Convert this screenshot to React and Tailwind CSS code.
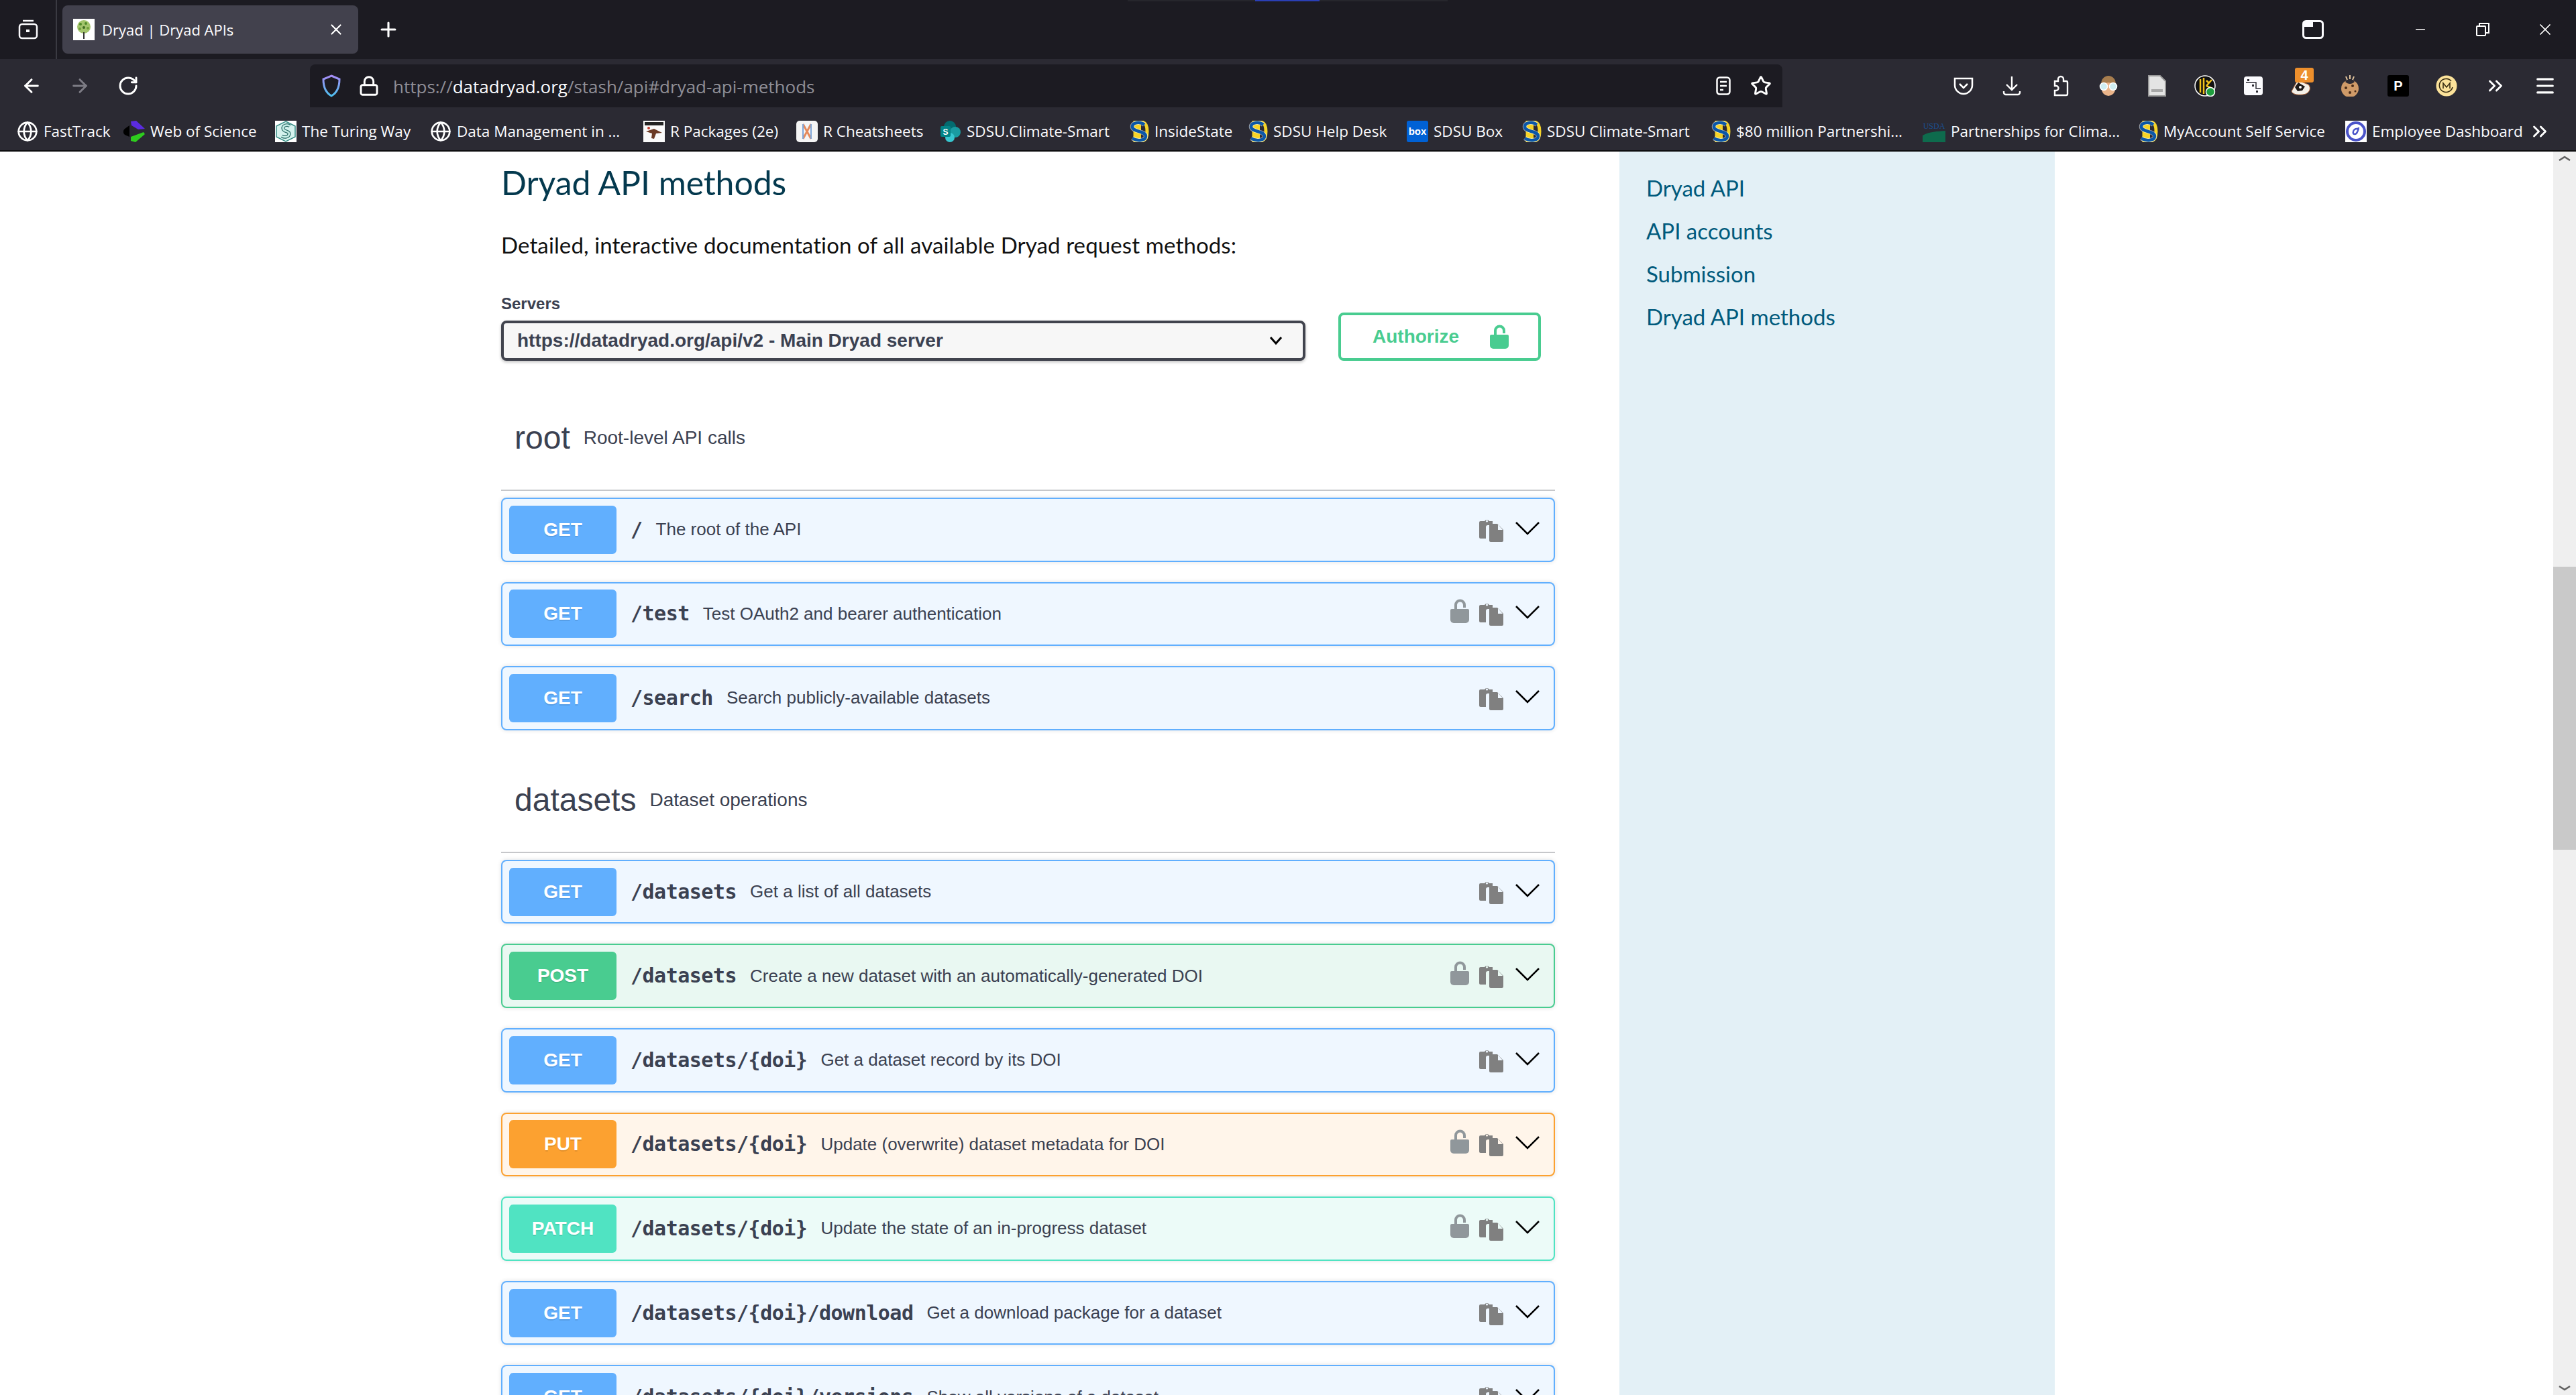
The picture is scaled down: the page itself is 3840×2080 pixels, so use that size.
import { Fragment } from 'react'
import { ArrowLeft, ArrowRight, RotateCw, Lock, Plus, X, Star, Minus, Menu, ChevronsRight, Globe } from 'lucide-react'

const UI_FONT = "font-['Open_Sans','Noto_Sans',sans-serif]"

const METHODS = {
  GET: { row: 'border-[#61affe] bg-[#eff7ff]', badge: 'bg-[#61affe]', bg: '#eff7ff' },
  POST: { row: 'border-[#49cc90] bg-[#e9f8f2]', badge: 'bg-[#49cc90]', bg: '#e9f8f2' },
  PUT: { row: 'border-[#fca130] bg-[#fff5ea]', badge: 'bg-[#fca130]', bg: '#fff5ea' },
  PATCH: { row: 'border-[#50e3c2] bg-[#ecfbf8]', badge: 'bg-[#50e3c2]', bg: '#ecfbf8' },
}

const ROOT_OPS = [
  { method: 'GET', path: '/', desc: 'The root of the API' },
  { method: 'GET', path: '/test', desc: 'Test OAuth2 and bearer authentication', lock: true },
  { method: 'GET', path: '/search', desc: 'Search publicly-available datasets' },
]

const DATASET_OPS = [
  { method: 'GET', path: '/datasets', desc: 'Get a list of all datasets' },
  { method: 'POST', path: '/datasets', desc: 'Create a new dataset with an automatically-generated DOI', lock: true },
  { method: 'GET', path: '/datasets/{doi}', desc: 'Get a dataset record by its DOI' },
  { method: 'PUT', path: '/datasets/{doi}', desc: 'Update (overwrite) dataset metadata for DOI', lock: true },
  { method: 'PATCH', path: '/datasets/{doi}', desc: 'Update the state of an in-progress dataset', lock: true },
  { method: 'GET', path: '/datasets/{doi}/download', desc: 'Get a download package for a dataset' },
  { method: 'GET', path: '/datasets/{doi}/versions', desc: 'Show all versions of a dataset' },
]

function SdsuIcon() {
  return (
    <svg width="30" height="32" viewBox="0 0 30 32" className="shrink-0">
      <path d="M9 2h9c7 0 9 5 9 14s-2 14-9 14H9z" fill="none" stroke="#f5d328" strokeWidth="5" />
      <rect x="11" y="1" width="7" height="30" fill="#f5d328" />
      <path d="M23 6C17 1 5 2 5 9c0 8 20 6 20 14 0 7-13 8-20 3" fill="none" stroke="#fff" strokeWidth="6.5" opacity="0.55" />
      <path d="M23 6C17 1 5 2 5 9c0 8 20 6 20 14 0 7-13 8-20 3" fill="none" stroke="#0b57a8" strokeWidth="4.5" />
    </svg>
  )
}

function BookmarkIcon({ kind }) {
  if (kind === 'globe') return <Globe size={32} strokeWidth={2} className="shrink-0 text-white" />
  if (kind === 'sdsu') return <SdsuIcon />
  if (kind === 'wos') {
    return (
      <svg width="32" height="32" viewBox="0 0 32 32" className="shrink-0">
        <path d="M11 1l8-1 13 12-10 1-10-6z" fill="#5b2be0" />
        <path d="M11 24l19-7 2 3-14 12-7-2z" fill="#2ecc1e" />
        <path d="M2 12l7-5v17l-7-3c-3-3-3-6 0-9z" fill="#000" />
      </svg>
    )
  }
  if (kind === 'turing') {
    return (
      <svg width="32" height="32" viewBox="0 0 32 32" className="shrink-0">
        <rect width="32" height="32" fill="#fff" />
        <path d="M16 1l14 7v16l-14 7-14-7V8z" fill="#d5f2ee" stroke="#3a8f88" strokeWidth="1.5" />
        <path d="M22 8c-4-3-11-1-10 4s10 3 9 8-7 5-11 3" fill="none" stroke="#2f6f6b" strokeWidth="5" />
        <path d="M22 8c-4-3-11-1-10 4s10 3 9 8-7 5-11 3" fill="none" stroke="#c8efe8" strokeWidth="2.5" />
      </svg>
    )
  }
  if (kind === 'rpkg') {
    return (
      <svg width="32" height="32" viewBox="0 0 32 32" className="shrink-0">
        <rect width="32" height="32" fill="#fafafa" />
        <rect x="2" y="2" width="28" height="5" fill="#222" />
        <path d="M4 16l12-4 12 6-9 1-3 8-4-1 1-7z" fill="#6b3a24" />
        <circle cx="8" cy="11" r="2" fill="#c23a2b" />
      </svg>
    )
  }
  if (kind === 'cheat') {
    return (
      <svg width="32" height="32" viewBox="0 0 32 32" className="shrink-0">
        <rect width="32" height="32" rx="5" fill="#f5f5f5" />
        <path d="M10 5l12 22M22 5L10 27" stroke="#e58a5c" strokeWidth="3" />
        <path d="M10 27V5M22 27V5" stroke="#7fa6d8" strokeWidth="2" />
      </svg>
    )
  }
  if (kind === 'sharepoint') {
    return (
      <svg width="32" height="32" viewBox="0 0 32 32" className="shrink-0">
        <circle cx="15" cy="9" r="9" fill="#036c70" />
        <circle cx="23" cy="17" r="8" fill="#1a9ba1" />
        <circle cx="15" cy="25" r="7" fill="#37c6d0" />
        <rect x="1" y="8" width="15" height="16" rx="2" fill="#038387" />
        <text x="8.5" y="21" textAnchor="middle" fontSize="12" fontWeight="700" fill="#fff" fontFamily="Liberation Sans">S</text>
      </svg>
    )
  }
  if (kind === 'box') {
    return (
      <div className="w-8 h-8 shrink-0 rounded-[3px] bg-[#0061d5] flex items-center justify-center text-white text-[15px] font-bold font-['Liberation_Sans',sans-serif]">box</div>
    )
  }
  if (kind === 'usda') {
    return (
      <svg width="34" height="32" viewBox="0 0 34 32" className="shrink-0">
        <text x="17" y="12" textAnchor="middle" fontSize="12" fill="#1b4f8f" fontFamily="Liberation Serif">USDA</text>
        <path d="M0 22c10-6 22-6 34-7v17H0z" fill="#0e6b4d" />
      </svg>
    )
  }
  if (kind === 'emp') {
    return (
      <svg width="32" height="32" viewBox="0 0 32 32" className="shrink-0">
        <rect width="32" height="32" fill="#fff" />
        <circle cx="16" cy="16" r="13" fill="none" stroke="#4a53c9" strokeWidth="4" />
        <path d="M20 10c-1 6-3 10-6 10s-3-5 0-7 5-1 6 1" fill="none" stroke="#4a53c9" strokeWidth="2.5" />
      </svg>
    )
  }
  return null
}

const BOOKMARKS = [
  { icon: 'globe', label: 'FastTrack', w: 'w-[159px]' },
  { icon: 'wos', label: 'Web of Science', w: 'w-[226px]' },
  { icon: 'turing', label: 'The Turing Way', w: 'w-[231px]' },
  { icon: 'globe', label: 'Data Management in ...', w: 'w-[318px]' },
  { icon: 'rpkg', label: 'R Packages (2e)', w: 'w-[228px]' },
  { icon: 'cheat', label: 'R Cheatsheets', w: 'w-[214px]' },
  { icon: 'sharepoint', label: 'SDSU.Climate-Smart', w: 'w-[282px]' },
  { icon: 'sdsu', label: 'InsideState', w: 'w-[177px]' },
  { icon: 'sdsu', label: 'SDSU Help Desk', w: 'w-[237px]' },
  { icon: 'box', label: 'SDSU Box', w: 'w-[171px]' },
  { icon: 'sdsu', label: 'SDSU Climate-Smart', w: 'w-[282px]' },
  { icon: 'sdsu', label: '$80 million Partnershi...', w: 'w-[316px]' },
  { icon: 'usda', label: 'Partnerships for Clima...', w: 'w-[321px]' },
  { icon: 'sdsu', label: 'MyAccount Self Service', w: 'w-[309px]' },
  { icon: 'emp', label: 'Employee Dashboard', w: 'w-[290px]' },
]

function TabStrip() {
  return (
    <div className="relative h-[88px] shrink-0 bg-[#1c1b22] flex items-center text-white">
      <div className="absolute left-[1681px] top-0 w-[477px] h-[2px] bg-[#26262c]">
        <div className="ml-[190px] w-[96px] h-[2px] bg-[#2a3fb5]" />
      </div>
      <div className="w-[85px] h-full flex items-center justify-center border-r-2 border-[#3a3a42]">
        <svg width="32" height="32" viewBox="0 0 32 32" fill="none" stroke="#fbfbfe" strokeWidth="2.5">
          <path d="M8 3h16" />
          <rect x="3" y="8" width="26" height="21" rx="4" />
          <rect x="13" y="16" width="5" height="4" fill="#fbfbfe" stroke="none" />
        </svg>
      </div>
      <div className="ml-[8px] w-[441px] h-[72px] rounded-[8px] bg-[#42414d] flex items-center pl-[16px] pr-[20px]">
        <svg width="32" height="32" viewBox="0 0 32 32" className="shrink-0">
          <rect width="32" height="32" fill="#fff" />
          <circle cx="16" cy="12" r="10" fill="#a3c46c" />
          <circle cx="11" cy="8" r="2" fill="#4f8a2a" />
          <circle cx="19" cy="7" r="2" fill="#4f8a2a" />
          <circle cx="16" cy="13" r="2" fill="#3e6b20" />
          <circle cx="10" cy="15" r="2" fill="#6fa03a" />
          <circle cx="22" cy="14" r="2" fill="#6fa03a" />
          <rect x="15" y="20" width="2" height="10" fill="#333" />
        </svg>
        <span className={`ml-[11px] flex-1 text-[22px] text-[#fbfbfe] ${UI_FONT}`}>Dryad | Dryad APIs</span>
        <X size={26} strokeWidth={2} />
      </div>
      <div className="ml-[28px]"><Plus size={34} strokeWidth={2.2} /></div>
      <div className="ml-auto flex items-center">
        <svg width="32" height="28" viewBox="0 0 32 28" className="mr-[133px]">
          <rect x="1.5" y="1.5" width="29" height="25" rx="4" fill="none" stroke="#fbfbfe" strokeWidth="3" />
          <rect x="2" y="2" width="14" height="8" fill="#fbfbfe" />
        </svg>
        <Minus size={22} strokeWidth={1.5} className="mr-[71px]" />
        <svg width="22" height="22" viewBox="0 0 22 22" fill="none" stroke="#fff" strokeWidth="2" className="mr-[68px]">
          <rect x="2" y="6" width="13" height="14" rx="1" />
          <path d="M6 6V2h14v14h-5" />
        </svg>
        <X size={28} strokeWidth={1.5} className="mr-[32px]" />
      </div>
    </div>
  )
}

function NavBar() {
  return (
    <div className="h-[72px] shrink-0 bg-[#2b2a33] flex text-white">
      <div className="w-[462px] flex items-center pl-[31px] gap-[40px] pt-[8px]">
        <ArrowLeft size={32} strokeWidth={2.2} />
        <ArrowRight size={32} strokeWidth={2.2} className="text-[#7d7c85]" />
        <RotateCw size={32} strokeWidth={2.2} />
      </div>
      <div className="mt-[8px] w-[2195px] h-[64px] rounded-t-[8px] bg-[#1c1b22] flex items-center pl-[16px] pr-[16px]">
        <svg width="32" height="36" viewBox="0 0 32 36" fill="none" strokeWidth="3" className="shrink-0">
          <defs>
            <linearGradient id="shield" x1="0" y1="0" x2="0" y2="1">
              <stop offset="0" stopColor="#a58bf5" />
              <stop offset="1" stopColor="#4fc0f0" />
            </linearGradient>
          </defs>
          <path d="M16 3l12 5c0 12-3 20-12 25C7 28 4 20 4 8z" stroke="url(#shield)" />
        </svg>
        <Lock size={32} strokeWidth={2.2} className="ml-[24px] shrink-0" />
        <span className={`ml-[20px] mt-[2px] flex-1 text-[26px] text-[#8f8e96] ${UI_FONT}`}>
          https://<span className="text-[#fbfbfe]">datadryad.org</span>/stash/api#dryad-api-methods
        </span>
        <svg width="22" height="28" viewBox="0 0 22 28" fill="none" stroke="#fff" strokeWidth="2.5" className="mr-[29px]">
          <rect x="1.5" y="1.5" width="19" height="25" rx="4" />
          <path d="M6 8h10M6 14h10M6 20h5" />
        </svg>
        <Star size={32} strokeWidth={2.2} />
      </div>
      <div className="flex-1 flex items-center pl-[254px] pt-[8px]">
        <ToolbarIcons />
      </div>
    </div>
  )
}

function ToolbarIcons() {
  return (
    <div className="flex items-center gap-[40px]">
      <svg width="32" height="32" viewBox="0 0 32 32" fill="none" stroke="#fff" strokeWidth="2.5" className="shrink-0">
        <path d="M3 5h26v10c0 7-6 13-13 13S3 22 3 15z" />
        <path d="M10 13l6 6 6-6" />
      </svg>
      <svg width="32" height="32" viewBox="0 0 32 32" fill="none" stroke="#fff" strokeWidth="2.4" className="shrink-0">
        <path d="M16 2v20M8 14l8 8 8-8M4 24v2a3 3 0 0 0 3 3h18a3 3 0 0 0 3-3v-2" />
      </svg>
      <svg width="32" height="32" viewBox="0 0 32 32" fill="none" stroke="#fff" strokeWidth="2.4" className="shrink-0">
        <path d="M8 9h5V6a4 4 0 0 1 8 0v3h4a2 2 0 0 1 2 2v17a2 2 0 0 1-2 2H8v-7h2a3.5 3.5 0 0 0 0-7H8z" />
      </svg>
      <svg width="32" height="32" viewBox="0 0 32 32" className="shrink-0">
        <path d="M5 14C5 6 10 1 16 1s11 5 11 13v6H5z" fill="#a77d4e" />
        <ellipse cx="16" cy="21" rx="10" ry="10" fill="#eab48a" />
        <circle cx="9" cy="17" r="5.5" fill="#cfeef2" stroke="#fff" strokeWidth="1.5" />
        <circle cx="23" cy="17" r="5.5" fill="#cfeef2" stroke="#fff" strokeWidth="1.5" />
      </svg>
      <svg width="32" height="32" viewBox="0 0 32 32" className="shrink-0">
        <path d="M4 1h17l8 8v22H4z" fill="#e4e4e4" stroke="#9a9a9a" strokeWidth="2" />
        <rect x="8" y="21" width="17" height="4" fill="#a8a8a8" />
      </svg>
      <svg width="32" height="32" viewBox="0 0 32 32" className="shrink-0">
        <circle cx="16" cy="16" r="15" fill="#111" stroke="#fff" strokeWidth="1.5" />
        <path d="M9 6v20M14 4v24M18 16l8-9M18 16l9 4M18 8l4 4" fill="none" stroke="#f1c21b" strokeWidth="2.5" />
        <circle cx="24" cy="25" r="6.5" fill="#1e9e3e" stroke="#fff" strokeWidth="1.5" />
      </svg>
      <svg width="32" height="32" viewBox="0 0 32 32" className="shrink-0">
        <rect x="2" y="2" width="28" height="28" rx="4" fill="#fbfbfe" />
        <path d="M5 11h15v9h7" fill="none" stroke="#2b2a33" strokeWidth="1.5" />
        <rect x="7" y="6" width="3" height="3" fill="#2b2a33" />
        <rect x="14" y="14" width="3" height="3" fill="#2b2a33" />
        <rect x="20" y="23" width="3" height="3" fill="#2b2a33" />
      </svg>
      <div className="relative w-8 h-8 shrink-0">
        <svg width="32" height="32" viewBox="0 0 32 32">
          <path d="M1 24L10 8l16 6c5 5 2 14-8 15S2 28 1 24z" fill="#f4f0e8" stroke="#b5693a" strokeWidth="1" />
          <path d="M6 18l5-7 10 6-4 6-7 1z" fill="#1f1a18" />
          <circle cx="14" cy="18" r="2" fill="#fff" />
        </svg>
        <div className="absolute left-[6px] -top-[11px] w-[28px] h-[22px] rounded-[3px] bg-[#ed8f2c] flex items-center justify-center text-white text-[20px] font-bold font-['Liberation_Sans',sans-serif]">4</div>
      </div>
      <svg width="32" height="32" viewBox="0 0 32 32" className="shrink-0">
        <path d="M16 0v6M10 2l2 5M22 2l-2 5" stroke="#e8c9a0" strokeWidth="2" />
        <circle cx="16" cy="20" r="13" fill="#cf9a68" />
        <path d="M9 10c4 4 10 4 14 0l-3-3h-8z" fill="#2b2a33" />
        <circle cx="10" cy="19" r="2" fill="#4a2c18" />
        <circle cx="20" cy="16" r="2" fill="#4a2c18" />
        <circle cx="16" cy="26" r="2" fill="#4a2c18" />
        <circle cx="24" cy="24" r="1.5" fill="#4a2c18" />
      </svg>
      <div className="w-8 h-8 shrink-0 rounded-[3px] bg-black flex items-center justify-center text-white text-[20px] font-bold font-['Liberation_Sans',sans-serif]">P</div>
      <svg width="32" height="32" viewBox="0 0 32 32" className="shrink-0">
        <circle cx="16" cy="16" r="15.5" fill="#fbe29a" />
        <path d="M23 9a10 10 0 1 0 2 9" fill="none" stroke="#3a2f14" strokeWidth="1.6" />
        <path d="M11 20v-8l5 6 5-6v8" fill="none" stroke="#3a2f14" strokeWidth="1.6" />
      </svg>
      <ChevronsRight size={34} strokeWidth={2} className="shrink-0" />
      <Menu size={34} strokeWidth={2.2} className="shrink-0" />
    </div>
  )
}

function BookmarksBar() {
  return (
    <div className="relative h-[66px] shrink-0 bg-[#2b2a33] border-b-2 border-[#0c0c0d] flex items-center pt-[8px] text-white">
      <div className="flex items-center pl-[25px]">
        {BOOKMARKS.map((b, i) => (
          <div key={i} className={`${b.w} shrink-0 flex items-center gap-[8px]`}>
            <BookmarkIcon kind={b.icon} />
            <span className={`text-[22.5px] whitespace-nowrap text-[#fbfbfe] ${UI_FONT}`}>{b.label}</span>
          </div>
        ))}
      </div>
      <ChevronsRight size={34} strokeWidth={2} className="absolute right-[37px]" />
    </div>
  )
}

function PadlockIcon({ color }) {
  return (
    <svg width="28" height="36" viewBox="0 0 28 36" className="shrink-0">
      <path d="M8 16V9a6.5 6.5 0 0 1 13 0v4" fill="none" stroke={color} strokeWidth="4" />
      <path d="M2 15h24a2 2 0 0 1 2 2v14a5 5 0 0 1-5 5H5a5 5 0 0 1-5-5V17a2 2 0 0 1 2-2z" fill={color} />
    </svg>
  )
}

function CopyIcon({ bg }) {
  return (
    <svg width="36" height="36" viewBox="0 0 36 36" className="shrink-0">
      <path d="M2 5h6a4 4 0 0 1 7 0h5v6h-7a3 3 0 0 0-3 3v17H2a2 2 0 0 1-2-2V7a2 2 0 0 1 2-2z" fill="#808080" />
      <circle cx="11.5" cy="5" r="1.6" fill={bg} />
      <path d="M17 9h10l9 9v16a2 2 0 0 1-2 2H17a2 2 0 0 1-2-2V11a2 2 0 0 1 2-2z" fill="#808080" />
      <path d="M28 10l7 8h-7z" fill={bg} />
    </svg>
  )
}

function OpRow({ op }) {
  const m = METHODS[op.method]
  return (
    <div className={`h-[95.6px] shrink-0 border-2 rounded-[8px] shadow-[0_0_6px_rgba(0,0,0,0.12)] flex items-center pl-[10px] pr-[21px] ${m.row}`}>
      <div className={`w-[160px] h-[72px] rounded-[6px] flex items-center justify-center text-white text-[28px] font-bold [text-shadow:0_2px_0_rgba(0,0,0,0.1)] font-['Liberation_Sans',sans-serif] ${m.badge}`}>
        {op.method}
      </div>
      <div className="ml-[21px] text-[30px] font-bold text-[#3b4151] font-['DejaVu_Sans_Mono','Liberation_Mono',monospace] leading-none tracking-[-0.5px]">{op.path}</div>
      <div className="ml-[20px] flex-1 text-[26px] text-[#3b4151] font-['Liberation_Sans',sans-serif]">{op.desc}</div>
      {op.lock && <div className="mr-[15px] -mt-[8px]"><PadlockIcon color="#90979b" /></div>}
      <CopyIcon bg={m.bg} />
      <svg width="36" height="22" viewBox="0 0 36 22" fill="none" stroke="#000" strokeWidth="2.6" className="ml-[18px] -mt-[4px] shrink-0">
        <path d="M1 2l17 17L35 2" />
      </svg>
    </div>
  )
}

function TagSection({ name, desc, tagClass, ops }) {
  return (
    <Fragment>
      <div className={`h-[124px] shrink-0 pb-[32px] border-b-2 border-[#c6c7ca] flex items-center pl-[20px] text-[#3b4151] font-['Liberation_Sans',sans-serif] ${tagClass}`}>
        <span className="text-[48px] leading-none">{name}</span>
        <span className="ml-[20px] text-[28px]">{desc}</span>
      </div>
      <div className="mt-[10px] shrink-0 flex flex-col gap-[30px]">
        {ops.map((op, i) => <OpRow key={i} op={op} />)}
      </div>
    </Fragment>
  )
}

function MainColumn() {
  return (
    <div className="w-[1571px] ml-[747px] shrink-0 flex flex-col">
      <h2 className="mt-[18px] shrink-0 text-[50px] leading-[56px] text-[#04394e] font-['Lato',sans-serif] tracking-[-0.1px]">Dryad API methods</h2>
      <p className="mt-[45px] shrink-0 text-[33px] leading-[40px] text-[#111] font-['Lato',sans-serif] tracking-[0.12px]">
        Detailed, interactive documentation of all available Dryad request methods:
      </p>
      <div className="mt-[54px] shrink-0 flex">
        <div className="w-[1199px]">
          <div className="text-[24px] leading-[28px] font-bold text-[#3b4151] font-['Liberation_Sans',sans-serif]">Servers</div>
          <div className="mt-[11px] h-[60px] border-[4px] border-[#41444e] rounded-[8px] bg-[#f7f7f7] shadow-[0_2px_4px_rgba(0,0,0,0.25)] flex items-center justify-between pl-[20px] pr-[30px]">
            <span className="text-[28px] font-bold text-[#3b4151] font-['Liberation_Sans',sans-serif]">https://datadryad.org/api/v2 - Main Dryad server</span>
            <svg width="20" height="14" viewBox="0 0 20 14" fill="none" stroke="#000" strokeWidth="3"><path d="M2 2l8 9 8-9" /></svg>
          </div>
        </div>
        <div className="ml-[49px] mt-[-1px] self-end w-[302px] h-[72px] border-[4px] border-[#49cc90] rounded-[8px] flex items-center pl-[47px]">
          <span className="text-[28px] font-bold text-[#49cc90] font-['Liberation_Sans',sans-serif]">Authorize</span>
          <div className="ml-[46px]"><PadlockIcon color="#49cc90" /></div>
        </div>
      </div>
      <TagSection name="root" desc="Root-level API calls" tagClass="mt-[70px]" ops={ROOT_OPS} />
      <TagSection name="datasets" desc="Dataset operations" tagClass="mt-[59px]" ops={DATASET_OPS} />
    </div>
  )
}

function Sidebar() {
  return (
    <div className="ml-[96px] w-[649px] shrink-0 h-full bg-[#e3f0f6] pl-[40px] pt-[30px] flex flex-col gap-[16px] text-[33px] leading-[48px] text-[#005a7c] font-['Lato',sans-serif]">
      <div>Dryad API</div>
      <div>API accounts</div>
      <div>Submission</div>
      <div>Dryad API methods</div>
    </div>
  )
}

function Scrollbar() {
  return (
    <div className="absolute right-0 top-0 bottom-0 w-[34px] bg-[#efefef]">
      <svg width="18" height="8" viewBox="0 0 18 8" fill="none" stroke="#5f5f5f" strokeWidth="2.5" className="absolute left-[8px] top-[6px]"><path d="M1 7l8-5 8 5" /></svg>
      <div className="absolute left-0 right-0 top-[619px] h-[422px] bg-[#c9c9c9]" />
      <svg width="18" height="8" viewBox="0 0 18 8" fill="none" stroke="#5f5f5f" strokeWidth="2.5" className="absolute left-[8px] bottom-[6px]"><path d="M1 1l8 5 8-5" /></svg>
    </div>
  )
}

export default function App() {
  return (
    <div className="w-[3840px] h-[2080px] overflow-hidden flex flex-col bg-white">
      <TabStrip />
      <NavBar />
      <BookmarksBar />
      <div className="relative flex-1 min-h-0 flex overflow-hidden">
        <MainColumn />
        <Sidebar />
        <Scrollbar />
      </div>
    </div>
  )
}
